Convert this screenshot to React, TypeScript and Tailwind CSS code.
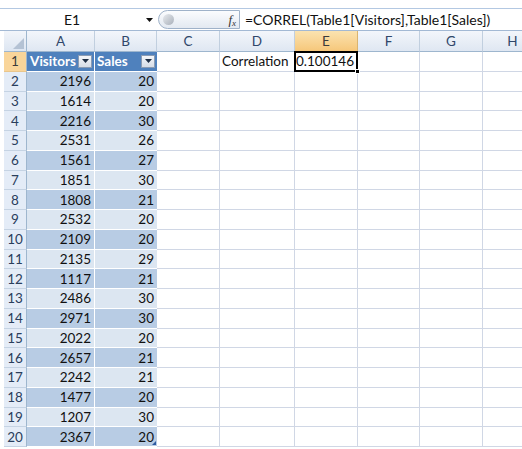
import React from "react";

const data: [number, number][] = [
  [2196, 20], [1614, 20], [2216, 30], [2531, 26], [1561, 27], [1851, 30],
  [1808, 21], [2532, 20], [2109, 20], [2135, 29], [1117, 21], [2486, 30],
  [2971, 30], [2022, 20], [2657, 21], [2242, 21], [1477, 20], [1207, 30],
  [2367, 20],
];

const cols = ["A", "B", "C", "D", "E", "F", "G", "H"];

function DropBtn() {
  return (
    <div className="w-[14px] h-[13px] shrink-0 bg-gradient-to-b from-[#f4f6f9] to-[#d6dde7] border border-[#8a9bb3] flex items-center justify-center">
      <svg width="7" height="4" viewBox="0 0 7 4">
        <path d="M0 0 L7 0 L3.5 4 Z" fill="#1f2f45" />
      </svg>
    </div>
  );
}

export default function App() {
  return (
    <div className="w-[522px] h-[449px] bg-white overflow-hidden font-['Lato','Liberation_Sans',Arial,sans-serif] text-[13.5px] text-[#111]">
      <div className="h-[8px]" />
      {/* formula bar */}
      <div className="h-[23px] flex items-center border-t border-b border-t-[#b3c8e2] border-b-[#a3b9d4] pl-[4px] text-[14px]">
        <div className="w-[136px] text-center">E1</div>
        <div className="w-[18px] flex justify-center">
          <svg width="7" height="4" viewBox="0 0 7 4">
            <path d="M0 0 L7 0 L3.5 4 Z" fill="#111" />
          </svg>
        </div>
        <div className="w-[82px] h-[19px] rounded-l-full rounded-r-[3px] border border-[#9fb2c9] bg-gradient-to-b from-[#fbfcfe] to-[#e3e9f1] flex items-center justify-between pl-[4px] pr-[3px]">
          <div className="w-[11px] h-[11px] rounded-full bg-gradient-to-br from-[#e8ebef] to-[#a9b0ba]" />
          <span className="font-['Liberation_Serif',serif] italic text-[13px] text-[#333]">
            f<sub className="text-[9px]">x</sub>
          </span>
        </div>
        <div className="ml-[5px] whitespace-nowrap">=CORREL(Table1[Visitors],Table1[Sales])</div>
      </div>

      {/* grid */}
      <div className="pl-[4px]">
        <div className="grid grid-cols-[23px_68px_62px_63px_75px_63px_62px_63px_60px]">
          {/* header row */}
          <div className="h-[21px] bg-gradient-to-b from-[#f2f5fa] to-[#dde6f2] border-r border-b border-[#9eb6ce] relative">
            <svg className="absolute right-[2px] bottom-[2px]" width="11" height="11" viewBox="0 0 11 11">
              <path d="M11 0 L11 11 L0 11 Z" fill="#b4c2d4" />
            </svg>
          </div>
          {cols.map((c) => (
            <div
              key={c}
              className={
                c === "E"
                  ? "h-[21px] bg-gradient-to-b from-[#fbe3b0] to-[#f6c77a] border-r border-b border-r-[#d9b471] border-b-[#c89b4e] flex items-center justify-center text-[#3b3b3b]"
                  : "h-[21px] bg-gradient-to-b from-[#f3f6fb] to-[#dfe7f2] border-r border-b border-r-[#c1cfdf] border-b-[#9eb6ce] flex items-center justify-center text-[#30476a]"
              }
            >
              {c}
            </div>
          ))}

          {/* row 1 */}
          <div className="h-[19.75px] bg-[#f9d59a] border-r border-b border-r-[#9eb6ce] border-b-[#e9c68c] flex items-center justify-center text-[#3b3b3b]">1</div>
          <div className="h-[19.75px] bg-[#4f81bd] border-r border-b border-white flex items-center justify-between pl-[3px] pr-[2px] text-white font-bold">
            <span>Visitors</span>
            <DropBtn />
          </div>
          <div className="h-[19.75px] bg-[#4f81bd] border-b border-white flex items-center justify-between pl-[2px] pr-[2px] text-white font-bold">
            <span>Sales</span>
            <DropBtn />
          </div>
          <div className="h-[19.75px] border-r border-b border-[#d0d7e5]" />
          <div className="h-[19.75px] border-r border-b border-[#d0d7e5] flex items-center pl-[2px]">Correlation</div>
          <div className="h-[19.75px] border-r border-b border-[#d0d7e5] flex items-center justify-end pr-[3px] relative">
            0.100146
            <div className="absolute left-[-1px] top-[-1px] right-[-1px] bottom-[-1px] border-2 border-black" />
            <div className="absolute right-[-3px] bottom-[-3px] w-[5px] h-[5px] bg-black border border-white" />
          </div>
          <div className="h-[19.75px] border-r border-b border-[#d0d7e5]" />
          <div className="h-[19.75px] border-r border-b border-[#d0d7e5]" />
          <div className="h-[19.75px] border-b border-[#d0d7e5]" />

          {data.map(([v, s], i) => {
            const row = i + 2;
            const dark = row % 2 === 0;
            const bg = dark ? "bg-[#b8cce4]" : "bg-[#dce6f1]";
            return (
              <React.Fragment key={row}>
                <div className="h-[19.75px] bg-[#e4ecf7] border-r border-b border-r-[#9eb6ce] border-b-[#c5d3e3] flex items-center justify-center text-[#2a3e5c]">
                  {row}
                </div>
                <div className={`h-[19.75px] ${bg} border-r border-b border-white flex items-center justify-end pr-[3px]`}>
                  {v}
                </div>
                <div className={`h-[19.75px] ${bg} border-b border-white flex items-center justify-end pr-[3px] relative`}>
                  {s}
                  {row === 20 && (
                    <svg className="absolute right-[1px] bottom-[1px]" width="4" height="4" viewBox="0 0 4 4">
                      <path d="M4 0 L4 4 L0 4 Z" fill="#2c5aa0" />
                    </svg>
                  )}
                </div>
                <div className="h-[19.75px] border-r border-b border-[#d0d7e5]" />
                <div className="h-[19.75px] border-r border-b border-[#d0d7e5]" />
                <div className="h-[19.75px] border-r border-b border-[#d0d7e5]" />
                <div className="h-[19.75px] border-r border-b border-[#d0d7e5]" />
                <div className="h-[19.75px] border-r border-b border-[#d0d7e5]" />
                <div className="h-[19.75px] border-b border-[#d0d7e5]" />
              </React.Fragment>
            );
          })}
        </div>
      </div>
    </div>
  );
}
